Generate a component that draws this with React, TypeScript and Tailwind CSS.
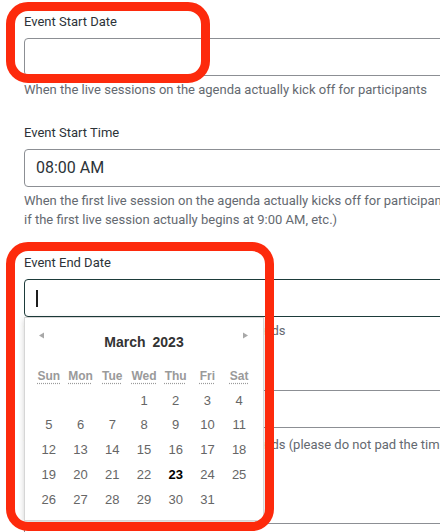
import React from "react";

const labelCls = "text-[13px] leading-[18px] text-[#2c3338]";

function Field({
  label,
  value,
  focused,
  help,
  helpTop = "mt-[4px]",
}: {
  label: string;
  value?: string;
  focused?: boolean;
  help: React.ReactNode;
  helpTop?: string;
}) {
  return (
    <div className="mb-[25px]">
      <div className={labelCls}>{label}</div>
      <div
        className={
          "mt-[7px] h-[38px] w-[560px] rounded-[4px] border bg-white flex items-center pl-[11px] text-[16px] text-[#2c3338] " +
          (focused ? "border-[#1d3b3a]" : "border-[#8c8f94]")
        }
      >
        {value}
        {focused && <span className="block w-[1.5px] h-[17px] bg-[#1e1e1e]" />}
      </div>
      <div className={"text-[13px] leading-[19px] text-[#646970] whitespace-nowrap " + helpTop}>{help}</div>
    </div>
  );
}

const dayNames = ["Sun", "Mon", "Tue", "Wed", "Thu", "Fri", "Sat"];
const cells: (number | null)[] = [null, null, null, ...Array.from({ length: 31 }, (_, i) => i + 1)];

function Calendar() {
  return (
    <div className="absolute left-[24px] top-[317px] w-[240px] h-[204px] bg-white border border-[#d6d6d6] shadow-[0_2px_6px_rgba(0,0,0,0.18)] font-['Liberation_Sans',Arial,sans-serif]">
      <div className="relative h-[44px]">
        <svg className="absolute left-[13px] top-[14px]" width="7" height="7" viewBox="0 0 7 7">
          <path d="M1 3.5 L6 0.5 L6 6.5 Z" fill="#a8a8a8" />
        </svg>
        <svg className="absolute left-[217px] top-[14px]" width="7" height="7" viewBox="0 0 7 7">
          <path d="M6 3.5 L1 0.5 L1 6.5 Z" fill="#a8a8a8" />
        </svg>
        <div className="absolute left-0 right-0 top-[15px] flex justify-center gap-[7px] text-[14px] font-bold leading-[18px] text-[#333]">
          <span>March</span>
          <span>2023</span>
        </div>
      </div>
      <div className="ml-[8px] w-[222px] grid grid-cols-7 mt-[7px]">
        {dayNames.map((d) => (
          <div key={d} className="h-[17px] flex justify-center text-[12px] font-bold leading-[15px] text-[#9a9a9a]">
            <span className="underline decoration-dotted decoration-[#9a9a9a] underline-offset-[3px]">{d}</span>
          </div>
        ))}
      </div>
      <div className="ml-[8px] w-[222px] grid grid-cols-7 mt-[2px]">
        {cells.map((c, i) => (
          <div
            key={i}
            className={
              "h-[24.8px] flex items-center justify-center text-[13px] " +
              (c === 23 ? "font-bold text-black" : "text-[#666]")
            }
          >
            {c ?? ""}
          </div>
        ))}
      </div>
    </div>
  );
}

export default function App() {
  return (
    <div className="relative w-[440px] h-[532px] overflow-hidden bg-white font-['Roboto','Noto_Sans',sans-serif]">
      <div className="pl-[24px] pt-[13px]">
        <Field
          label="Event Start Date"
          help="When the live sessions on the agenda actually kick off for participants"
        />
        <Field
          label="Event Start Time"
          value="08:00 AM"
          help={
            <>
              When the first live session on the agenda actually kicks off for participants (e.g. enter 9:00 AM
              <br />
              if the first live session actually begins at 9:00 AM, etc.)
            </>
          }
        />
        <Field
          label="Event End Date"
          focused
          help="When the final live sessions on agendas ends"
        />
        <Field
          label="Event End Time"
          helpTop="mt-[7px]"
          help={
            <>
              When the final live sessions on agendas ends (please do not pad the time for networking, etc.)
              <br />
              Enter the time the final session wraps up.
            </>
          }
        />
        <Field label="Event Timezone" help="The timezone in which the event takes place" />
      </div>

      <Calendar />

      <div className="absolute left-[6px] top-[2px] w-[204px] h-[81px] rounded-[22px] border-[9px] border-[#fd2a0c]" />
      <div className="absolute left-[6px] top-[242px] w-[268px] h-[289px] rounded-[22px] border-[9px] border-[#fd2a0c]" />
    </div>
  );
}
